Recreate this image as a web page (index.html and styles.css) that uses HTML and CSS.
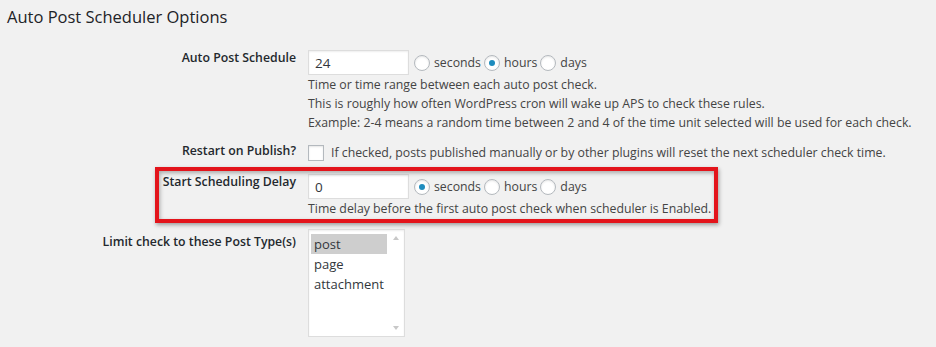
FILE: index.html
```html
<!DOCTYPE html>
<html lang="en">
<head>
    <meta charset="UTF-8">
    <title>Auto Post Scheduler Options</title>
    <link rel="stylesheet" href="styles.css">
</head>
<body>
    <h2 class="page-title">Auto Post Scheduler Options</h2>

    <div class="form">
        <div class="row row-schedule">
            <div class="label">Auto Post Schedule</div>
            <div class="field">
                <div class="inline">
                    <input type="text" class="text-input" value="24">
                    <label class="radio"><input type="radio" name="unit1"> seconds</label>
                    <label class="radio"><input type="radio" name="unit1" checked> hours</label>
                    <label class="radio"><input type="radio" name="unit1"> days</label>
                </div>
                <p class="desc">Time or time range between each auto post check.<br>
                This is roughly how often WordPress cron will wake up APS to check these rules.<br>
                Example: 2-4 means a random time between 2 and 4 of the time unit selected will be used for each check.</p>
            </div>
        </div>

        <div class="row row-restart">
            <div class="label">Restart on Publish?</div>
            <div class="field">
                <label class="check"><input type="checkbox"> If checked, posts published manually or by other plugins will reset the next scheduler check time.</label>
            </div>
        </div>

        <div class="row row-delay highlight">
            <div class="label">Start Scheduling Delay</div>
            <div class="field">
                <div class="inline">
                    <input type="text" class="text-input" value="0">
                    <label class="radio"><input type="radio" name="unit2" checked> seconds</label>
                    <label class="radio"><input type="radio" name="unit2"> hours</label>
                    <label class="radio"><input type="radio" name="unit2"> days</label>
                </div>
                <p class="desc">Time delay before the first auto post check when scheduler is Enabled.</p>
            </div>
        </div>

        <div class="row row-types">
            <div class="label">Limit check to these Post Type(s)</div>
            <div class="field">
                <div class="listbox">
                    <ul class="options">
                        <li class="selected">post</li>
                        <li>page</li>
                        <li>attachment</li>
                    </ul>
                    <div class="scrollbar">
                        <span class="arrow-up"></span>
                        <span class="arrow-down"></span>
                    </div>
                </div>
            </div>
        </div>
    </div>
</body>
</html>
```

FILE: styles.css
```css
body {
    margin: 0;
    padding: 0 0 0 7px;
    background-color: #f1f1f1;
    color: #444;
    font-family: "Open Sans", Arial, sans-serif;
    font-size: 12.3px;
    line-height: 19px;
}
.page-title {
    margin: 0;
    padding-top: 5px;
    font-size: 16.5px;
    font-weight: 500;
    line-height: 24px;
    color: #1d2327;
}
.form {
    margin-top: 21px;
}
.row {
    display: grid;
    grid-template-columns: 289px 1fr;
    column-gap: 12px;
}
.label {
    text-align: right;
    font-weight: 600;
    color: #23282d;
    margin-top: -2px;
}
.field p {
    margin: 0;
}
.inline {
    display: flex;
    align-items: center;
    height: 25px;
}
.text-input {
    box-sizing: border-box;
    width: 101px;
    height: 25px;
    margin: 0 5px 0 0;
    padding: 0 6px;
    border: 1px solid #ddd;
    background: #fff;
    box-shadow: inset 0 1px 2px rgba(0,0,0,0.07);
    font-family: inherit;
    font-size: 13.5px;
    color: #32373c;
}
.radio {
    display: flex;
    align-items: center;
    margin-right: 3px;
}
.radio input,
.check input {
    -webkit-appearance: none;
    appearance: none;
    box-sizing: border-box;
    width: 16px;
    height: 16px;
    margin: 0 4px 0 0;
    border: 1px solid #b4b9be;
    background: #fff;
    box-shadow: inset 0 1px 2px rgba(0,0,0,0.1);
}
.radio input {
    border-radius: 50%;
    display: grid;
    place-items: center;
}
.radio input:checked::before {
    content: "";
    width: 6px;
    height: 6px;
    border-radius: 50%;
    background: #1e8cbe;
}
.desc {
    margin-top: 3px;
}
.row-restart {
    margin-top: 11px;
}
.check {
    display: flex;
    align-items: center;
}
.check input {
    margin-right: 7px;
}
.row-delay {
    margin-top: 12px;
}
.row-types {
    margin-top: 11px;
}
.row-types .label {
    margin-top: 3px;
}

/* red annotation box */
.highlight {
    position: relative;
}
.highlight::after {
    content: "";
    position: absolute;
    left: 148px;
    top: -7px;
    width: 555px;
    height: 48px;
    border: 4px solid #e3141b;
    box-shadow: 1px 2px 4px rgba(0,0,0,0.35), inset 1px 2px 4px rgba(0,0,0,0.3);
    pointer-events: none;
}

.listbox {
    display: flex;
    box-sizing: border-box;
    width: 97px;
    height: 108px;
    border: 1px solid #ddd;
    background: #fff;
    box-shadow: inset 0 1px 2px rgba(0,0,0,0.07);
}
.options {
    list-style: none;
    margin: 0;
    padding: 4px 0 0 2px;
    flex: 1;
    font-size: 13px;
    color: #32373c;
}
.options li {
    height: 20px;
    line-height: 20px;
    padding-left: 3px;
}
.options li.selected {
    background: #cecece;
}
.scrollbar {
    width: 17px;
    display: flex;
    flex-direction: column;
    justify-content: space-between;
    align-items: center;
    padding: 6px 0;
}
.arrow-up,
.arrow-down {
    width: 0;
    height: 0;
    border-left: 3.5px solid transparent;
    border-right: 3.5px solid transparent;
}
.arrow-up {
    border-bottom: 4px solid #c8c8c8;
}
.arrow-down {
    border-top: 4px solid #c8c8c8;
}
```
